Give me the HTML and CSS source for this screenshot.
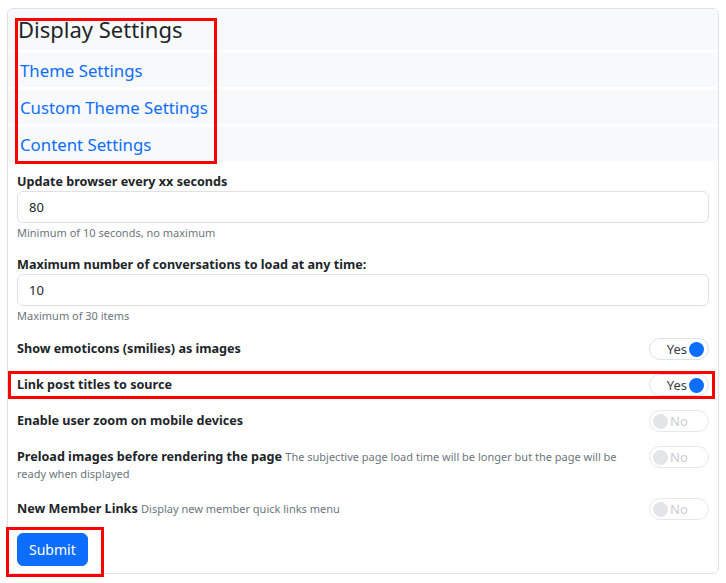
FILE: index.html
```html
<!DOCTYPE html>
<html lang="en">
<head>
    <meta charset="UTF-8">
    <meta name="viewport" content="width=device-width, initial-scale=1.0">
    <title>Display Settings</title>
    <link rel="stylesheet" href="styles.css">
</head>
<body>
    <div class="card">
        <div class="card-head">
            <div class="head-row head-title"><h1>Display Settings</h1></div>
            <div class="head-row"><a class="section-link" href="#">Theme Settings</a></div>
            <div class="head-row"><a class="section-link" href="#">Custom Theme Settings</a></div>
            <div class="head-row"><a class="section-link" href="#">Content Settings</a></div>
        </div>

        <form class="card-body" onsubmit="return false">
            <div class="field">
                <label class="field-label" for="refresh">Update browser every xx seconds</label>
                <input class="field-input" id="refresh" type="text" value="80">
                <div class="field-help">Minimum of 10 seconds, no maximum</div>
            </div>
            <div class="field">
                <label class="field-label" for="convos">Maximum number of conversations to load at any time:</label>
                <input class="field-input" id="convos" type="text" value="10">
                <div class="field-help">Maximum of 30 items</div>
            </div>

            <div class="switch-list">
                <div class="switch-row">
                    <div class="switch-label"><b>Show emoticons (smilies) as images</b></div>
                    <span class="switch on"><span class="switch-text">Yes</span><span class="knob"></span></span>
                </div>
                <div class="switch-row">
                    <div class="switch-label"><b>Link post titles to source</b></div>
                    <span class="switch on"><span class="switch-text">Yes</span><span class="knob"></span></span>
                </div>
                <div class="switch-row">
                    <div class="switch-label"><b>Enable user zoom on mobile devices</b></div>
                    <span class="switch off"><span class="knob"></span><span class="switch-text">No</span></span>
                </div>
                <div class="switch-row">
                    <div class="switch-label"><b>Preload images before rendering the page</b> <small>The subjective page load time will be longer but the page will be ready when displayed</small></div>
                    <span class="switch off"><span class="knob"></span><span class="switch-text">No</span></span>
                </div>
                <div class="switch-row">
                    <div class="switch-label"><b>New Member Links</b> <small>Display new member quick links menu</small></div>
                    <span class="switch off"><span class="knob"></span><span class="switch-text">No</span></span>
                </div>
            </div>

            <button class="btn-submit" type="submit">Submit</button>
        </form>
    </div>

    <!-- highlight frames -->
    <div class="mark mark-head"></div>
    <div class="mark mark-row"></div>
    <div class="mark mark-submit"></div>
</body>
</html>
```

FILE: styles.css
```css
body {
    margin: 8px 7px;
    font-family: "Noto Sans", "Open Sans", sans-serif;
    color: #212529;
    background: #fff;
}
.card {
    border: 1px solid #dee2e6;
    border-radius: 6px;
    overflow: hidden;
}
.card-head {
    display: flex;
    flex-direction: column;
    gap: 3px;
}
.head-row {
    background: #f8f9fa;
    height: 34px;
    display: flex;
    align-items: center;
    padding-left: 12px;
}
.head-title {
    height: 41px;
    padding-left: 10px;
}
.head-title h1 {
    margin: 0 0 2px;
    font-size: 22px;
    font-weight: 400;
    line-height: 1;
}
.section-link {
    color: #0d6efd;
    text-decoration: none;
    font-size: 16.8px;
}
.card-body {
    padding: 12px 9px 7px;
}
.field {
    margin-bottom: 15px;
}
.field-label {
    display: block;
    font-size: 12.6px;
    font-weight: 700;
    line-height: 18px;
}
.field-input {
    display: block;
    box-sizing: border-box;
    width: 100%;
    height: 32px;
    padding: 0 11px;
    border: 1px solid #dee2e6;
    border-radius: 6px;
    font-family: inherit;
    font-size: 13px;
    color: #212529;
}
.field-help {
    margin-top: 2px;
    font-size: 11px;
    line-height: 16px;
    color: #6c757d;
}
.switch-list {
    margin-top: -8px;
}
.switch-row {
    display: flex;
    align-items: flex-start;
    gap: 12px;
    padding: 9px 0;
}
.switch-label {
    flex: 1;
    font-size: 12.6px;
    line-height: 16px;
}
.switch-label b {
    line-height: 18px;
}
.switch-label small {
    font-size: 11px;
    color: #6c757d;
}
/* the pill keeps out of the row height so every row stays 36px */
.switch {
    box-sizing: border-box;
    width: 60px;
    height: 22px;
    margin: -2px 0 -6px;
    border: 1px solid #dee2e6;
    border-radius: 11px;
    display: flex;
    align-items: center;
    padding: 0 4px;
    gap: 2px;
    font-size: 13px;
}
.switch.on {
    justify-content: flex-end;
    color: #3a3f44;
}
.switch.off {
    border-color: #e6e8eb;
    color: #c9cdd1;
    padding-left: 3px;
}
.knob {
    width: 15px;
    height: 15px;
    border-radius: 50%;
    background: #0d6efd;
}
.switch.off .knob {
    background: #e3e6e9;
}
.btn-submit {
    margin-top: 6px;
    background: #0d6efd;
    color: #fff;
    border: 1px solid #0d6efd;
    border-radius: 6px;
    padding: 6px 11px;
    font-family: inherit;
    font-size: 14px;
    line-height: 19px;
    cursor: pointer;
}
.mark {
    position: absolute;
    border: 3px solid #ff0000;
    box-sizing: border-box;
}
.mark-head {
    left: 15px;
    top: 18px;
    width: 202px;
    height: 146px;
}
.mark-row {
    left: 8px;
    top: 371px;
    width: 707px;
    height: 28px;
}
.mark-submit {
    left: 6px;
    top: 527px;
    width: 98px;
    height: 50px;
}
```
